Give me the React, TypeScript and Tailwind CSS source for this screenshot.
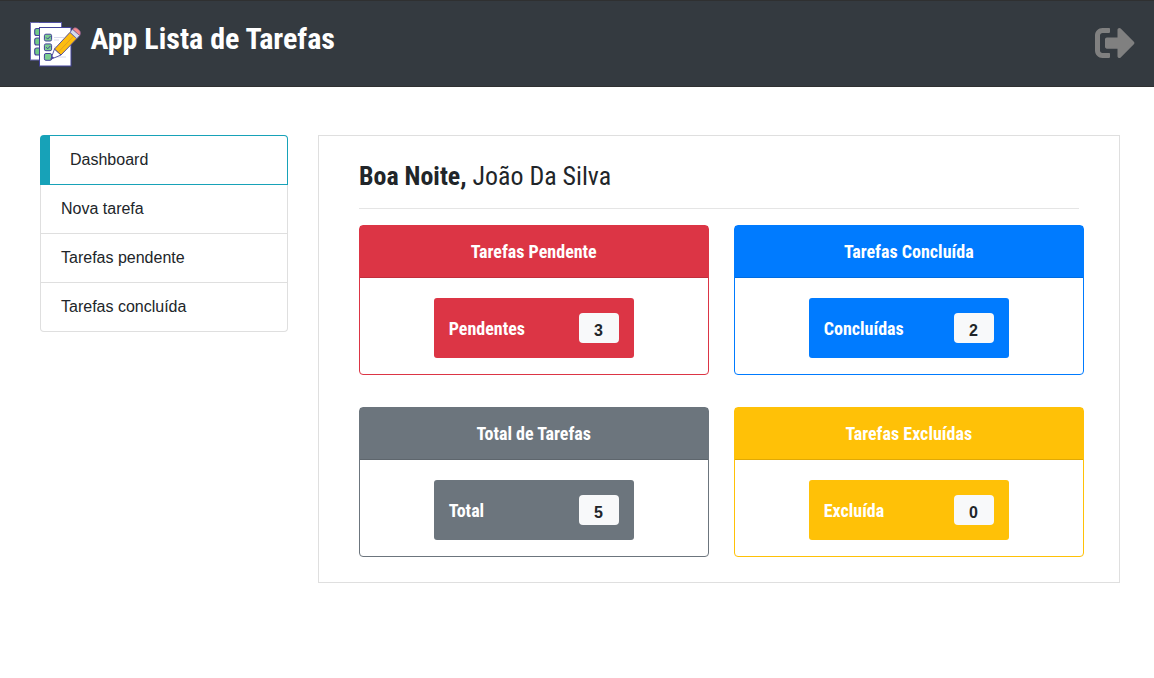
import { FaSignOutAlt } from "react-icons/fa";

const cond = "font-['Roboto_Condensed',Roboto,sans-serif] [font-stretch:75%]";

function Logo() {
  return (
    <svg width="51" height="50" viewBox="0 0 51 50" fill="none">
      <rect x="0.5" y="3.5" width="31" height="37.5" fill="#fff" stroke="#6665ad" strokeWidth="1" />
      <path d="M9 3.5h22.5" stroke="#43429a" strokeWidth="0.6" />
      <g fill="#6fca86" stroke="#43429a" strokeWidth="1.1">
        <rect x="4.7" y="9.5" width="7" height="7" rx="2" />
        <rect x="4.7" y="19" width="7" height="7" rx="2" />
        <rect x="4.7" y="29" width="7" height="7" rx="2" />
      </g>
      <rect x="9.5" y="8.5" width="31.5" height="38.5" fill="#fff" stroke="#43429a" strokeWidth="1" />
      <path d="M24 18.5h10M24 21h5M24 28h3M24 38h12" stroke="#cfd0ea" strokeWidth="0.8" />
      <g fill="#7ccd90" stroke="#43429a" strokeWidth="1">
        <rect x="14.4" y="15.2" width="7.2" height="6.8" rx="1.5" />
        <rect x="14.4" y="24.9" width="7.2" height="6.8" rx="1.5" />
        <rect x="14.4" y="34.5" width="7.2" height="6.8" rx="1.5" />
      </g>
      <path d="M16.2 18.5l1.500 1.600 2.800-3M16.200 28.200l1.500 1.600 2.800-3" stroke="#43429a" strokeWidth="1" />
      <path d="M20.800 40.300L24.500 30l6.500 6z" fill="#fff" stroke="#43429a" strokeWidth="0.900" />
      <path d="M24.500 30L40 13.300l6.800 6.400L31 36z" fill="#fdbd10" stroke="#43429a" strokeWidth="0.900" />
      <path d="M28 33.500L43.800 16.800" stroke="#d9972b" strokeWidth="0.800" />
      <path d="M40 13.300l2.700-3 7 6.200-2.900 3.200z" fill="#d5dcec" stroke="#6665ad" strokeWidth="0.900" />
      <path d="M42.700 10.300c1.300-1.900 3.300-1.900 4.800-.6l1.900 1.700c1.300 1.200 1.400 3.500.3 5.100z" fill="#f58b8b" stroke="#8a5f92" strokeWidth="0.700" />
      <path d="M20.800 40.300l1.200-3.400 2.200 1.800z" fill="#43429a" />
    </svg>
  );
}

const cards = [
  { title: "Tarefas Pendente", label: "Pendentes", value: 3, bg: "bg-[#dc3545]", border: "border-[#dc3545]" },
  { title: "Tarefas Concluída", label: "Concluídas", value: 2, bg: "bg-[#007bff]", border: "border-[#007bff]" },
  { title: "Total de Tarefas", label: "Total", value: 5, bg: "bg-[#6c757d]", border: "border-[#6c757d]" },
  { title: "Tarefas Excluídas", label: "Excluída", value: 0, bg: "bg-[#ffc107]", border: "border-[#ffc107]" },
];

const links = ["Nova tarefa", "Tarefas pendente", "Tarefas concluída"];

export default function App() {
  return (
    <div className="min-h-screen bg-white font-['Liberation_Sans',sans-serif] text-base text-[#212529]">
      <header className="flex h-[87px] items-start border-y border-[#2f3031] bg-[#343a40] pl-[30px] pr-[19px]">
        <div className="mt-[18px]">
          <Logo />
        </div>
        <h1 className={`ml-[9.5px] mt-[20px] text-[30px] leading-[36px] font-bold text-white ${cond}`}>App Lista de Tarefas</h1>
        <FaSignOutAlt size={40} color="#808080" className="mt-[22px] ml-auto" />
      </header>
      <div className="flex items-start pt-12 pl-10">
        <nav className="w-[248px]">
          <a className="flex h-[50px] items-center rounded-t border border-l-[10px] border-[#17a2b8] pl-5">Dashboard</a>
          <div className="rounded-b border-x border-b border-[#dfdfdf]">
            {links.map((l, i) => (
              <a key={l} className={`flex items-center pl-5 ${i < 2 ? "h-[49px] border-b border-[#dfdfdf]" : "h-12"}`}>
                {l}
              </a>
            ))}
          </div>
        </nav>
        <main className="ml-[30px] h-[448px] w-[802px] border border-[#dfdfdf] px-10">
          <h2 className={`mt-6 h-8 text-[25.92px] leading-8 ${cond}`}>
            <b className="font-bold">Boa Noite,</b> João Da Silva
          </h2>
          <hr className="mt-4 w-[720px] border-[#e5e5e5]" />
          <div className="mt-4 grid w-[725px] grid-cols-[350px_350px] gap-x-[25px] gap-y-8">
            {cards.map((c) => (
              <section key={c.title} className={`h-[150px] rounded border ${c.border}`}>
                <div className={`flex h-[52px] items-center justify-center border-b border-black/12 pr-[0.5px] text-lg font-bold text-white ${c.bg} ${cond}`}>
                  {c.title}
                </div>
                <div className={`mx-auto mt-5 flex h-[60px] w-[200px] items-center justify-between rounded-[3px] pr-[15px] pl-[14.7px] ${c.bg}`}>
                  <span className={`pt-0.5 text-lg font-bold text-white ${cond}`}>{c.label}</span>
                  <span className="flex h-[30px] w-10 items-center justify-center rounded bg-[#f8f9fa] pt-1.5 pr-px text-base font-bold">{c.value}</span>
                </div>
              </section>
            ))}
          </div>
        </main>
      </div>
    </div>
  );
}
